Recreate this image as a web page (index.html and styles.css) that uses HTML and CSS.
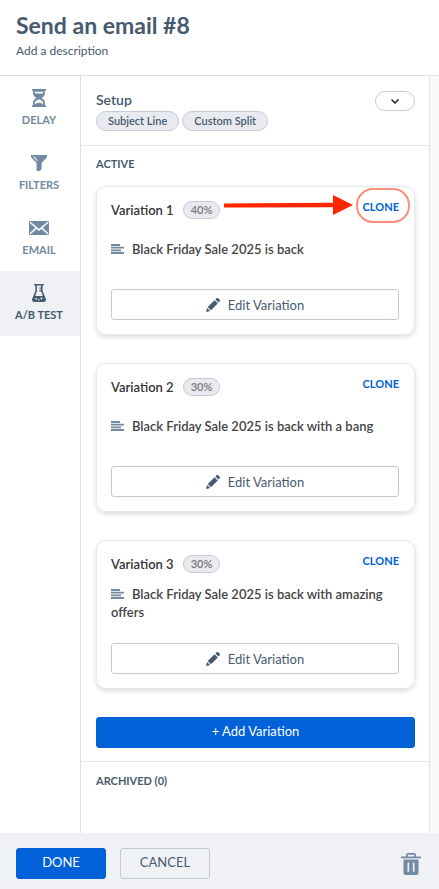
FILE: index.html
```
<!DOCTYPE html>
<html lang="en">
<head>
    <meta charset="utf-8">
    <meta name="viewport" content="width=device-width, initial-scale=1">
    <title>Send an email #8</title>
    <link rel="stylesheet" href="styles.css">
</head>
<body>

<!-- shared icons -->
<svg class="sprite" aria-hidden="true">
    <symbol id="icon-lines" viewBox="0 0 13 10">
        <path d="M0 0h9v1.900H0zM0 2.700h13v1.900H0zM0 5.400h10v1.900H0zM0 8.100h13V10H0z"/>
    </symbol>
    <symbol id="icon-pencil" viewBox="0 0 14 14">
        <path d="M0 14l1.100-4.100 3 3zM1.700 9.100l6.900-6.900 3.200 3.200-6.900 6.900zM9.400 1.500l1-1c.6-.6 1.400-.6 2 0l1.100 1.100c.6.6.6 1.400 0 2l-1 1z"/>
    </symbol>
</svg>

<header class="header">
    <h1>Send an email #8</h1>
    <p>Add a description</p>
</header>

<div class="content">
    <nav class="tabs">
        <a class="tab" href="#delay">
            <svg width="14" height="18" viewBox="0 0 14 18">
                <path fill-rule="evenodd" d="M0 0h14v1.800h-1.100v2.700c0 1.900-1.400 3.500-3.500 4.500 2.100 1 3.500 2.600 3.500 4.500v2.700H14V18H0v-1.800h1.100v-2.700C1.100 11.600 2.500 10 4.600 9 2.500 8 1.100 6.400 1.100 4.500V1.800H0zM3.200 4.600h7.600c.3-.6.4-1.200.4-1.800H2.800c0 .6.100 1.200.4 1.800zM7 10.200c-2.400.8-4 2-4 3.400v2.200c.6-1.200 2-2 4-2s3.400.8 4 2v-2.200c0-1.400-1.600-2.600-4-3.400z"/>
            </svg>
            <span>DELAY</span>
        </a>
        <a class="tab" href="#filters">
            <svg width="16" height="18" viewBox="0 0 16 18">
                <path fill-rule="evenodd" d="M0 1h16v1.300c0 .7-.2 1.200-.7 1.700L10.600 9v6.300L8.500 17H5.600V9L.7 4C.2 3.500 0 3 0 2.300zM2 2.700l4.500 4.900V6.200L3.600 2.700z"/>
            </svg>
            <span>FILTERS</span>
        </a>
        <a class="tab" href="#email">
            <svg width="20" height="18" viewBox="0 0 20 18">
                <rect y="2" width="20" height="14" rx="1"/>
                <path class="cut" d="M1 3.300l9 7.600 9-7.600M1 14.700l6.600-5.800M19 14.700l-6.600-5.800"/>
            </svg>
            <span>EMAIL</span>
        </a>
        <a class="tab tab-active" href="#ab-test">
            <svg width="14" height="18" viewBox="0 0 14 18">
                <path fill-rule="evenodd" d="M2.200 0h9.600v1.600h-1.200V7l3.200 7.700c.6 1.800-.2 3.300-2 3.300H2.200c-1.800 0-2.600-1.500-2-3.300L3.400 7V1.600H2.200zM5 1.600v5.700L3.100 12h7.800L9 7.300H7.200V6.100H9V4.700H7.200V3.500H9V1.600zM3.500 14.100v1.500H5v-1.500zM8.600 13.500v1.700h1.700v-1.700zM6.200 15.300v1.200h1.200v-1.200z"/>
            </svg>
            <span>A/B TEST</span>
        </a>
    </nav>

    <main class="panel">
        <section class="setup">
            <div>
                <h2>Setup</h2>
                <div class="tags">
                    <span class="tag">Subject Line</span>
                    <span class="tag">Custom Split</span>
                </div>
            </div>
            <button class="toggle" type="button" aria-label="Expand setup">
                <svg width="8" height="5" viewBox="0 0 8 5"><path d="M.5.5L4 4 7.500.5"/></svg>
            </button>
        </section>

        <section class="active">
            <h3>ACTIVE</h3>

            <article class="card">
                <div class="card-head">
                    <h4>Variation 1</h4>
                    <span class="percent">40%</span>
                    <button class="clone" type="button">CLONE</button>
                </div>
                <div class="subject">
                    <p><svg width="13" height="10"><use href="#icon-lines"/></svg>Black Friday Sale 2025 is back</p>
                </div>
                <button class="btn btn-outline btn-block" type="button">
                    <svg width="14" height="14"><use href="#icon-pencil"/></svg>Edit Variation
                </button>
                <svg class="arrow" width="130" height="20" viewBox="0 0 130 20" aria-hidden="true">
                    <path d="M1 8.500l109-.8V0l20 10-20 10v-7.800L1 12.500z"/>
                </svg>
                <span class="ring"></span>
            </article>

            <article class="card">
                <div class="card-head">
                    <h4>Variation 2</h4>
                    <span class="percent">30%</span>
                    <button class="clone" type="button">CLONE</button>
                </div>
                <div class="subject">
                    <p><svg width="13" height="10"><use href="#icon-lines"/></svg>Black Friday Sale 2025 is back with a bang</p>
                </div>
                <button class="btn btn-outline btn-block" type="button">
                    <svg width="14" height="14"><use href="#icon-pencil"/></svg>Edit Variation
                </button>
            </article>

            <article class="card">
                <div class="card-head">
                    <h4>Variation 3</h4>
                    <span class="percent">30%</span>
                    <button class="clone" type="button">CLONE</button>
                </div>
                <div class="subject">
                    <p><svg width="13" height="10"><use href="#icon-lines"/></svg>Black Friday Sale 2025 is back with amazing offers</p>
                </div>
                <button class="btn btn-outline btn-block" type="button">
                    <svg width="14" height="14"><use href="#icon-pencil"/></svg>Edit Variation
                </button>
            </article>

            <button class="btn btn-primary btn-block btn-action" type="button">+ Add Variation</button>
        </section>

        <section class="archived">
            <h3>ARCHIVED (0)</h3>
        </section>
    </main>
</div>

<footer class="footer">
    <button class="btn btn-primary btn-action" type="button">DONE</button>
    <button class="btn btn-outline btn-action" type="button">CANCEL</button>
    <button class="trash" type="button" aria-label="Delete">
        <svg width="20" height="22" viewBox="0 0 20 22">
            <path fill-rule="evenodd" d="M5 3.500V2c0-1.200.8-2 2-2h6c1.200 0 2 .8 2 2v1.500h5v1.700H0V3.500zM6.700 3.500h6.600V1.700H6.700zM2.500 6.500h15V20c0 1.200-.8 2-2 2h-11c-1.200 0-2-.8-2-2zM6.500 9.500v9.300h1.700V9.500zM11.800 9.500v9.300h1.700V9.500z"/>
        </svg>
    </button>
</footer>

</body>
</html>
```
FILE: styles.css
```
* {
    box-sizing: border-box;
}
body {
    display: flex;
    flex-direction: column;
    min-height: 100vh;
    margin: 0;
    background: #fff;
    color: #465a6e;
    font-family: Lato, "Open Sans", sans-serif;
    font-size: 13px;
    line-height: 18px;
}
h1, h2, h3, h4, p {
    margin: 0;
}
h2, h4 {
    font-weight: 600;
}
button {
    font-family: inherit;
    cursor: pointer;
}
svg {
    fill: currentColor;
}
.sprite {
    position: absolute;
    width: 0;
    height: 0;
}

/* header */
.header {
    padding: 12px 16px 15px;
    border-bottom: 1px solid #dcdfea;
}
.header h1 {
    font-size: 23px;
    line-height: 26px;
}
.header p {
    margin-top: 4px;
    font-size: 12px;
}

.content {
    display: flex;
    flex: 1;
    padding-right: 9px;
    background: #f9f9f9;
}

/* left tabs */
.tabs {
    flex: 0 0 81px;
    background: #fff;
    border-right: 1px solid #dcdfea;
}
.tab {
    display: flex;
    flex-direction: column;
    align-items: center;
    gap: 7px;
    height: 65px;
    padding: 13px 2px 0 0;
    color: #7189a1;
    font-size: 11px;
    font-weight: bold;
    line-height: 12px;
    text-decoration: none;
}
.tab-active {
    background: #f0f1f5;
    color: #465a6e;
}
.cut {
    fill: none;
    stroke: #fff;
    stroke-width: 1.5;
}

/* main panel */
.panel {
    flex: 1;
    background: #fff;
    border-right: 1px solid #e3e5e9;
}
.setup {
    display: flex;
    justify-content: space-between;
    align-items: flex-start;
    padding: 15px 14px 14px 15px;
    border-bottom: 1px solid #e3e5e9;
}
.setup h2 {
    font-size: 14px;
    line-height: 18px;
}
.tags {
    display: flex;
    gap: 3px;
    margin-top: 2px;
}
.tag, .percent {
    border: 1px solid #c3cbd9;
    border-radius: 10px;
    background: #e9eaef;
    font-size: 11px;
    font-weight: 600;
}
.tag {
    padding: 0 11px;
}
.toggle {
    display: flex;
    align-items: center;
    justify-content: center;
    width: 40px;
    height: 20px;
    border: 1px solid #c3cbd9;
    border-radius: 10px;
    background: #fff;
}
.toggle svg {
    fill: none;
    stroke: #222;
    stroke-width: 1.5;
}
h3 {
    font-size: 11px;
    line-height: 12px;
}

/* variations */
.active {
    padding: 12px 14px 13px 15px;
    border-bottom: 1px solid #e3e5e9;
}
.card {
    position: relative;
    margin: 16px 0 28px;
    padding: 14px 15px 14px 14px;
    border: 1px solid #e6e8ee;
    border-radius: 10px;
    box-shadow: 0 2px 5px rgba(0, 0, 0, 0.15);
}
.card + .card {
    margin-top: 0;
}
.card-head {
    display: flex;
    align-items: center;
    gap: 9px;
}
.card h4 {
    color: #333;
    font-size: 13px;
}
.percent {
    padding: 0 7px;
    color: #777;
    line-height: 16px;
}
.clone {
    align-self: flex-start;
    margin-left: auto;
    padding: 0;
    border: 0;
    background: none;
    color: #0061d8;
    font-size: 11px;
    font-weight: bold;
    line-height: 12px;
}
.subject {
    display: flex;
    align-items: center;
    min-height: 48px;
    margin: 6px 0 16px;
    color: #444;
    font-weight: 600;
}
.subject svg {
    margin-right: 8px;
    color: #7189a1;
}
.arrow {
    position: absolute;
    top: 8px;
    right: 61px;
    color: #ff2600;
}
.ring {
    position: absolute;
    top: 1px;
    right: 4px;
    width: 54px;
    height: 35px;
    border: 2px solid #ff8d7c;
    border-radius: 17px;
    pointer-events: none;
}

/* buttons */
.btn {
    display: flex;
    align-items: center;
    justify-content: center;
    gap: 8px;
    min-width: 90px;
    height: 31px;
    border: 1px solid #c3c9d6;
    border-radius: 3px;
    background: none;
    color: #465a6e;
    font-size: 13px;
}
.btn-block {
    width: 100%;
}
.btn-action {
    padding-bottom: 5px;
}
.btn-primary {
    border-color: #0061d8;
    background: #0061d8;
    color: #fff;
}

.archived {
    padding: 13px 15px;
}

/* footer */
.footer {
    display: flex;
    align-items: center;
    gap: 14px;
    padding: 15px 18px 10px 16px;
    background: #f0f1f5;
}
.trash {
    margin-left: auto;
    padding: 0;
    border: 0;
    background: none;
    color: #7189a1;
}
.trash svg {
    display: block;
}
```
